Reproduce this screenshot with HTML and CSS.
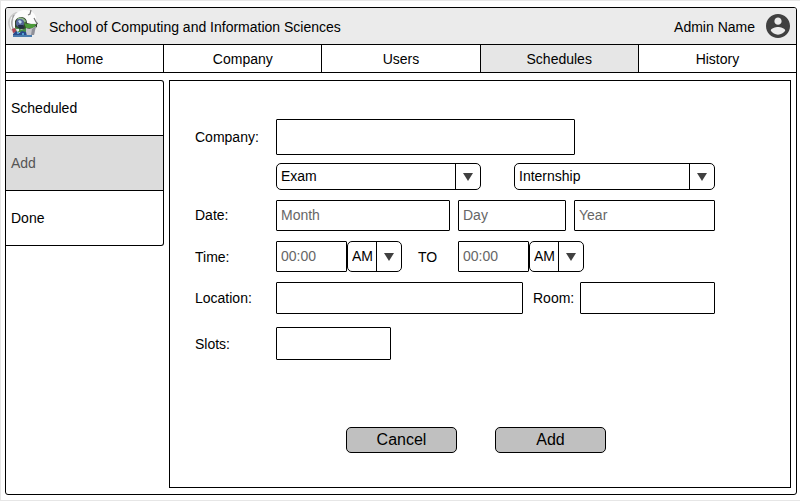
FILE: index.html
```html
<!DOCTYPE html>
<html lang="en">
<head>
<meta charset="utf-8">
<meta name="viewport" content="width=device-width, initial-scale=1">
<title>Schedules - Add</title>
<link rel="stylesheet" href="styles.css">
</head>
<body>
<div class="frame">
  <header class="header">
    <svg class="logo" viewBox="0 0 30 30" aria-hidden="true">
      <path fill="#c9c9c9" d="M0 13Q1 6 8 3L12 4V22L5 23Q0 20 0 13Z"/>
      <path fill="#fcfcfc" d="M5 13Q5 3 15 1Q25 0 28 8L28 14H20L14 10L8 12L7 20Q4 18 5 13Z"/>
      <path fill="none" stroke="#f4f4f4" stroke-width="1.5" d="M4 8Q1 14 4 20"/>
      <path fill="none" stroke="#9a9a9a" d="M6 6Q2 13 5 20"/>
      <path fill="#33452f" d="M7 12Q9 8 14 8Q19 9 19 14L27 16L29 14V18L25 20L17 21L12 20L7 19Z"/>
      <path fill="#4c9a3a" d="M16 14L20 15L28 15L26 19L18 19Z"/>
      <path fill="#8fb98a" d="M10 9Q15 7 18 12L17 14Q14 10 9 11Z"/>
      <circle fill="#56679c" cx="12" cy="14" r="4"/>
      <path fill="#c0dcec" d="M10 12L12 11L14 13L12 15Z"/>
      <path fill="#222f46" d="M10 16H15L16 19L11 20Z"/>
      <path fill="#c6c6cc" d="M18 19Q23 21 28 17L26 26H18Z"/>
      <path fill="#8f9098" d="M24 20L28 17L26 26H23Z"/>
      <path fill="#489047" d="M7 18L10 19L14 21L18 19V23H8Z"/>
      <path fill="#b04450" d="M4 20L7 19L9 23L5 24Z"/>
      <path fill="#dfeaf0" d="M8 20L11 20L11 22L9 23Z"/>
      <path fill="#294b8c" d="M5 25L8 22L11 24L14 22L18 23L19 27H5Z"/>
      <path fill="#52a0d0" d="M9 23H11V25H9ZM14 24H16V26H14Z"/>
      <path fill="#4a7cae" d="M5 26H24V28H5Z"/>
      <path fill="none" stroke="#777" stroke-width="1.2" d="M23 1L22 5L20 6M26 9L28 13L30 15"/>
    </svg>
    <span class="title">School of Computing and Information Sciences</span>
    <span class="user">Admin Name</span>
    <svg class="avatar" viewBox="2 2 20 20" aria-hidden="true">
      <path fill="#404040" d="M12 2C6.480 2 2 6.480 2 12s4.480 10 10 10 10-4.480 10-10S17.520 2 12 2zm0 3c1.660 0 3 1.340 3 3s-1.340 3-3 3-3-1.340-3-3 1.340-3 3-3zm0 14.200c-2.500 0-4.710-1.280-6-3.220.030-1.990 4-3.080 6-3.080 1.990 0 5.970 1.090 6 3.080-1.290 1.940-3.500 3.220-6 3.220z"/>
    </svg>
  </header>
  <nav class="tabs">
    <a href="#">Home</a>
    <a href="#">Company</a>
    <a href="#">Users</a>
    <a href="#" class="active">Schedules</a>
    <a href="#">History</a>
  </nav>
  <div class="content">
    <nav class="sidebar">
      <a href="#">Scheduled</a>
      <a href="#" class="active">Add</a>
      <a href="#">Done</a>
    </nav>
    <main class="panel">
      <form class="form">
        <div class="row row-company">
          <label for="company">Company:</label>
          <input id="company" class="company" type="text">
        </div>
        <div class="row row-type">
          <span class="dropdown exam"><select aria-label="Type"><option>Exam</option></select></span>
          <span class="dropdown program"><select aria-label="Program"><option>Internship</option></select></span>
        </div>
        <div class="row row-date">
          <label for="month">Date:</label>
          <input id="month" class="month" type="text" placeholder="Month">
          <input class="day" type="text" placeholder="Day" aria-label="Day">
          <input class="year" type="text" placeholder="Year" aria-label="Year">
        </div>
        <div class="row row-time">
          <label for="start">Time:</label>
          <span class="time">
            <input id="start" type="text" placeholder="00:00">
            <span class="dropdown"><select aria-label="Start AM or PM"><option>AM</option><option>PM</option></select></span>
          </span>
          <label class="to" for="end">TO</label>
          <span class="time">
            <input id="end" type="text" placeholder="00:00">
            <span class="dropdown"><select aria-label="End AM or PM"><option>AM</option><option>PM</option></select></span>
          </span>
        </div>
        <div class="row row-location">
          <label for="location">Location:</label>
          <input id="location" class="location" type="text">
          <label class="room-label" for="room">Room:</label>
          <input id="room" class="room" type="text">
        </div>
        <div class="row row-slots">
          <label for="slots">Slots:</label>
          <input id="slots" class="slots" type="text">
        </div>
        <div class="actions">
          <button type="button">Cancel</button>
          <button type="button">Add</button>
        </div>
      </form>
    </main>
  </div>
</div>
</body>
</html>
```
FILE: styles.css
```css
* {
  box-sizing: border-box;
}

body {
  display: flex;
  min-height: 100vh;
  margin: 0;
  padding: 6px 3px 5px 4px;
  border: solid #e6e6e6;
  border-width: 1px 0 1px 1px;
  background: #fff;
  color: #000;
  font: 14px/16px "Liberation Sans", Arial, sans-serif;
}

a {
  color: inherit;
  text-decoration: none;
}

.frame {
  display: flex;
  flex: 1;
  flex-direction: column;
  border: 1px solid #000;
  border-radius: 3px;
}

.header {
  display: flex;
  align-items: center;
  height: 37px;
  padding: 2px 6px 0 2px;
  border-bottom: 1px solid #000;
  border-radius: 2px 2px 0 0;
  background: #ebebeb;
}

.logo {
  width: 30px;
  height: 30px;
  margin-bottom: 6px;
}

.title {
  margin-left: 11px;
}

.user {
  margin-left: auto;
}

.avatar {
  width: 24px;
  height: 24px;
  margin: 0 0 2px 11px;
}

.tabs {
  display: flex;
  height: 28px;
  border-bottom: 1px solid #000;
}

.tabs a {
  flex: 1;
  padding-top: 6px;
  border-right: 1px solid #000;
  text-align: center;
}

.tabs a:last-child {
  border-right: 0;
}

.tabs .active {
  background: #e6e6e6;
}

.content {
  display: flex;
  flex: 1;
  align-items: flex-start;
  gap: 5px;
  padding: 7px 5px 6px 0;
}

.sidebar {
  width: 158px;
  border: 1px solid #000;
  border-left: 0;
  border-radius: 0 3px 3px 0;
}

.sidebar a {
  display: flex;
  align-items: center;
  height: 55px;
  padding-left: 5px;
  border-bottom: 1px solid #000;
}

.sidebar a:last-child {
  height: 54px;
  border-bottom: 0;
}

.sidebar .active {
  background: #dcdcdc;
  color: #555;
}

.panel {
  flex: 1;
  align-self: stretch;
  border: 1px solid #000;
}

.form {
  padding: 38px 33px 0 25px;
}

.row {
  display: flex;
  align-items: stretch;
  max-width: 520px;
  margin-bottom: 10px;
}

.row > label {
  flex: none;
  align-self: center;
  width: 81px;
}

input,
select,
button {
  margin: 0;
  border: 1px solid #000;
  background: #fff;
  color: #000;
  font: inherit;
}

input {
  min-width: 0;
  padding: 0 4px 1px;
  border-radius: 1px;
}

input::placeholder {
  color: #666;
  opacity: 1;
}

.dropdown {
  position: relative;
  display: flex;
}

.dropdown select {
  width: 100%;
  padding: 0 26px 1px 4px;
  border-radius: 5px;
  appearance: none;
}

.dropdown::before {
  content: "";
  position: absolute;
  top: 0;
  right: 25px;
  bottom: 0;
  border-left: 1px solid #000;
  pointer-events: none;
}

.dropdown::after {
  content: "";
  position: absolute;
  top: calc(50% - 4px);
  right: 8px;
  border: solid transparent;
  border-width: 8px 5px 0;
  border-top-color: #404040;
  pointer-events: none;
}

.row-company {
  height: 36px;
  margin-bottom: 8px;
}

.company {
  flex: 0 1 299px;
}

.row-type {
  justify-content: space-between;
  height: 27px;
  padding-left: 81px;
}

.exam {
  flex: 0 1 205px;
}

.program {
  flex: 0 1 201px;
}

.row-date {
  gap: 8px;
  height: 31px;
}

.row-date > label {
  width: 73px;
  padding-bottom: 2px;
}

.month {
  flex: 1 1 174px;
}

.day {
  flex: 1 1 108px;
}

.year {
  flex: 1 1 141px;
}

.row-time {
  height: 31px;
}

.time {
  display: flex;
}

.time input {
  width: 71px;
}

.time .dropdown {
  width: 55px;
}

.row-time .to {
  width: 56px;
  padding-left: 16px;
}

.row-location {
  height: 32px;
  margin-bottom: 13px;
}

.location {
  flex: 1 1 247px;
}

.row-location .room-label {
  width: 57px;
  padding-left: 10px;
}

.room {
  flex: 1 1 135px;
}

.row-slots {
  height: 33px;
  margin-bottom: 67px;
}

.slots {
  flex: 0 1 115px;
}

.actions {
  display: flex;
  justify-content: center;
  gap: 38px;
}

.actions button {
  width: 111px;
  height: 26px;
  padding: 0;
  border-radius: 5px;
  background: #c0c0c0;
  font-size: 16px;
}
```
